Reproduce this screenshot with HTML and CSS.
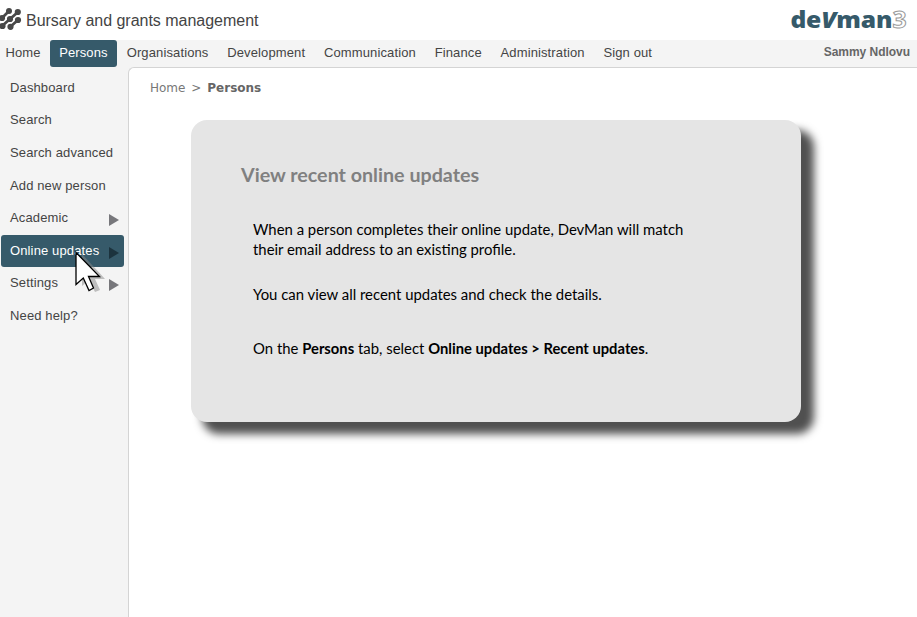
FILE: index.html
```
<!DOCTYPE html>
<html lang="en">
<head>
<meta charset="utf-8">
<title>Bursary and grants management</title>
<link rel="stylesheet" href="styles.css">
</head>
<body>
<header class="top">
  <svg class="mark" width="22" height="24" viewBox="0 0 22 24">
    <g stroke="#484848" stroke-width="2.8" fill="none"><path d="M2 12L9 5M2 20L10 13L18 6M10 21L18 14"/></g>
    <g fill="#484848"><circle cx="9" cy="5" r="3"/><circle cx="17.8" cy="6" r="3.1"/><circle cx="2" cy="12" r="3.1"/><circle cx="10" cy="13" r="3.1"/><circle cx="18" cy="14" r="3.1"/><circle cx="2.5" cy="20" r="3.1"/><circle cx="10.5" cy="20.800" r="3.1"/></g>
  </svg>
  <h1 class="title">Bursary and grants management</h1>
  <div class="brand"><span class="brand-name">de<i>V</i>man</span><span class="brand-num">3</span></div>
</header>
<nav class="tabs">
  <a class="tab home">Home</a><a class="tab active">Persons</a><a class="tab org">Organisations</a><a class="tab">Development</a><a class="tab">Communication</a><a class="tab">Finance</a><a class="tab">Administration</a><a class="tab">Sign out</a>
  <span class="user">Sammy Ndlovu</span>
</nav>
<div class="body">
  <aside class="side">
    <a class="item">Dashboard</a>
    <a class="item">Search</a>
    <a class="item">Search advanced</a>
    <a class="item">Add new person</a>
    <a class="item sub">Academic</a>
    <a class="item sub current">Online updates</a>
    <a class="item sub">Settings</a>
    <a class="item">Need help?</a>
  </aside>
  <main class="content">
    <div class="crumbs"><span>Home</span><span class="sep">&gt;</span><b>Persons</b></div>
    <section class="card">
      <h2>View recent online updates</h2>
      <p class="p1">When a person completes their online update, DevMan will match<br>their email address to an existing profile.</p>
      <p class="p2">You can view all recent updates and check the details.</p>
      <p class="p3">On the <b>Persons</b> tab, select <b>Online updates &gt; Recent updates</b>.</p>
    </section>
  </main>
</div>
<svg class="cursor" width="36" height="46" viewBox="0 0 36 46">
  <path d="M7 3V35L14 29L20 41L25 39L20 28H30Z" fill="#888" opacity=".5"/>
  <path d="M1 1.5V33.5L8.3 27L14 39.5L18.5 37L13.5 25.5H24.500Z" fill="#fff" stroke="#000" stroke-width="1.3"/>
</svg>
</body>
</html>
```
FILE: styles.css
```
* { box-sizing: border-box; }
body { margin: 0; width: 917px; height: 617px; overflow: hidden; background: #fff; color: #444; font: 13px "Liberation Sans", Arial, sans-serif; }
.top { height: 40px; display: flex; align-items: flex-start; }
.mark { margin-top: 6px; }
.title { margin: 10px 0 0 4px; font-size: 16px; line-height: 21px; font-weight: 400; letter-spacing: -.02px; }
.brand { margin: 5px 10px 0 auto; display: flex; font: 800 23px/28px "Open Sans", sans-serif; color: #365a6a; transform: scaleX(1.07); transform-origin: right; }
.brand-name { letter-spacing: -.1px; }
.brand-num { font-weight: 700; color: #fff; -webkit-text-stroke: 1px #999; }
.tabs { height: 28px; background: #f4f4f4; display: flex; align-items: flex-start; }
.tab { line-height: 25px; margin-right: 18.8px; letter-spacing: .12px; }
.home { margin: 0 9.6px 0 5.4px; }
.active { height: 27px; padding: 0 9px; margin-right: 10px; background: #365a6a; color: #fff; border-radius: 3px; }
.user { margin: 0 7px 0 auto; font-size: 12px; font-weight: 700; line-height: 24px; color: #666; letter-spacing: -.03px; }
.body { display: flex; height: 550px; margin-top: -1px; background: #f4f4f4; }
.side { width: 128px; padding: 4.9px 4px 0 1px; }
.item { display: flex; height: 32.6px; line-height: 31px; padding: 0 5px 0 9px; letter-spacing: .13px; }
.sub::after { content: ""; margin: 12px 0 0 auto; border-left: 10px solid #77777b; border-top: 6px solid transparent; border-bottom: 6px solid transparent; height: 0; }
.current { background: #365a6a; color: #fff; border-radius: 3px; }
.current::after { border-left-color: #1c333e; }
.content { flex: 1; background: #fff; border: 1px solid #d4d4d4; border-width: 1px 0 0 1px; border-radius: 6px 0 0 0; }
.crumbs { padding: 10px 0 0 21px; font: 12px/20px "DejaVu Sans", Verdana, sans-serif; color: #777; display: flex; }
.crumbs b { color: #666; }
.sep { margin: 0 5.9px; }
.card { width: 610px; height: 302px; margin: 22px 0 0 62px; padding: 43px 0 0 50px; background: #e5e5e5; border-radius: 16px; box-shadow: 12px 11px 8px 1px #505050; color: #000; font: 14.9px/20px Lato, sans-serif; }
.card h2 { margin: 0; font-size: 19.7px; line-height: 24px; color: #808080; }
.card p { margin: 0 0 0 12px; }
.card .p1 { margin-top: 32px; }
.card .p2 { margin-top: 25px; }
.card .p3 { margin-top: 34px; }
.card .p3 b { font-size: 14.75px; }
.cursor { position: absolute; left: 75px; top: 251px; }
```
